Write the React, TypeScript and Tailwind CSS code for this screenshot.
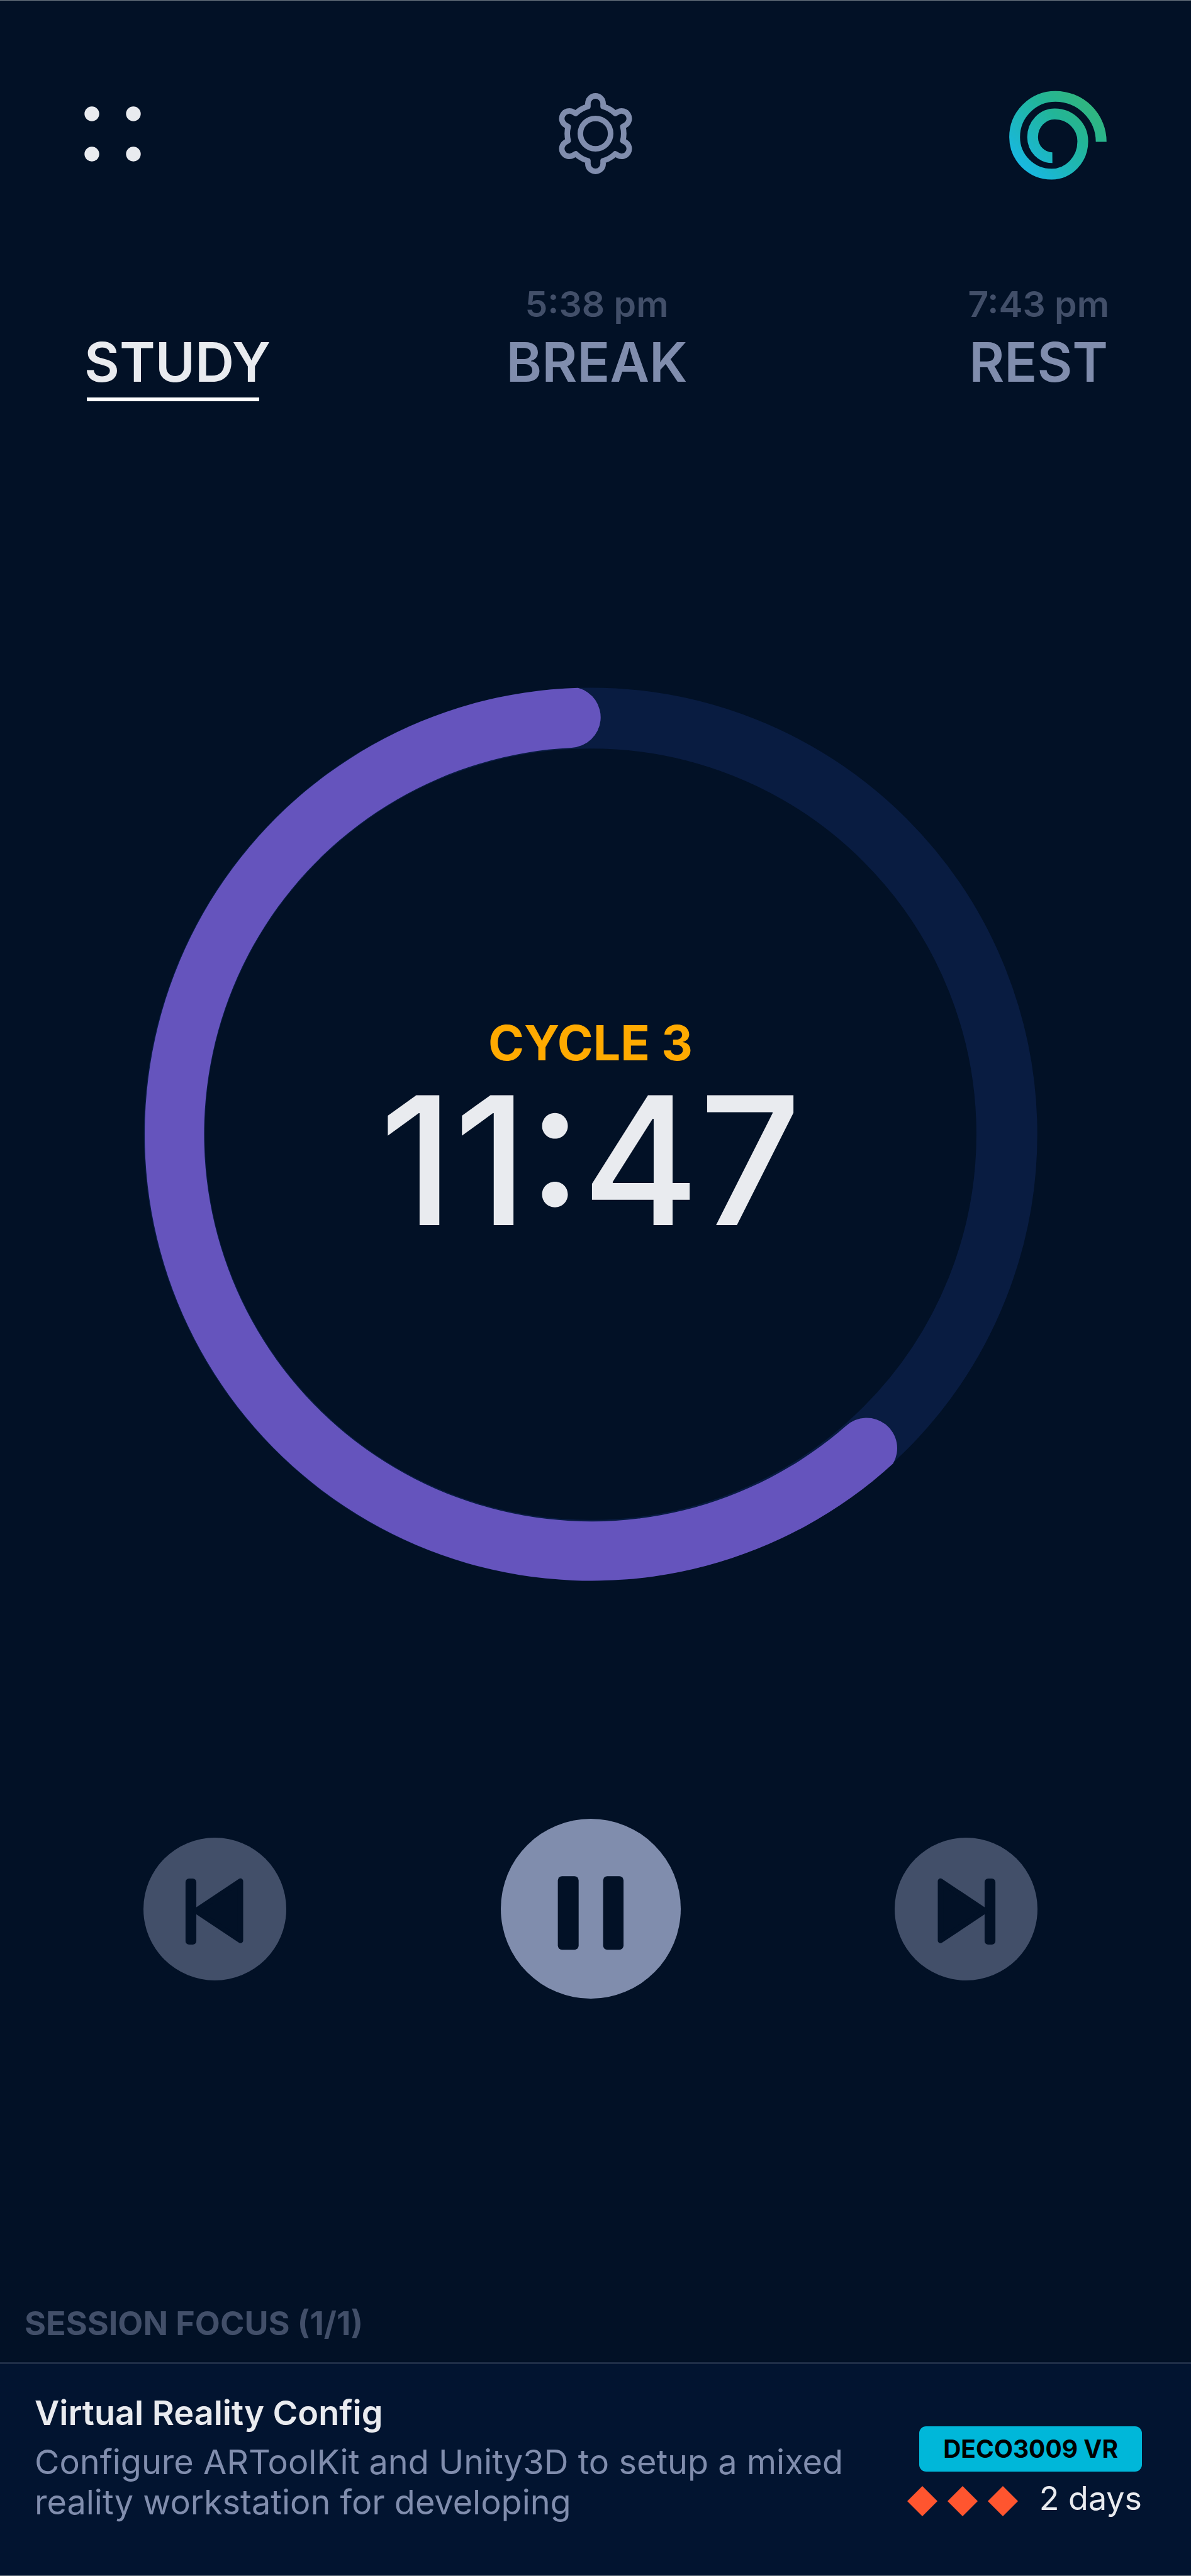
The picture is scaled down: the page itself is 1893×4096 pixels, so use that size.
import React from "react";

function MenuDots() {
  return (
    <svg viewBox="0 0 90 88" className="h-[88px] w-[90px]" fill="#e9ebef" aria-hidden="true">
      <circle cx="12" cy="12" r="11.7" />
      <circle cx="78" cy="12" r="11.7" />
      <circle cx="12" cy="76" r="11.7" />
      <circle cx="78" cy="76" r="11.7" />
    </svg>
  );
}

const rotate = (x: number, y: number, deg: number) => {
  const a = (deg * Math.PI) / 180;
  const rx = x * Math.cos(a) - y * Math.sin(a);
  const ry = x * Math.sin(a) + y * Math.cos(a);
  return `${rx.toFixed(1)} ${ry.toFixed(1)}`;
};

// Six rounded teeth joined by arcs of the gear body.
const gearPath =
  [0, 60, 120, 180, 240, 300]
    .map((deg, i) => {
      const start = rotate(-59, -211, deg);
      const join = i === 0 ? `M${start}` : `A219 219 0 0 1 ${start}`;
      return `${join}L${rotate(-59, -234, deg)}A59 59 0 0 1 ${rotate(59, -234, deg)}L${rotate(59, -211, deg)}`;
    })
    .join("") + `A219 219 0 0 1 ${rotate(-59, -211, 0)}Z`;

function GearIcon() {
  return (
    <svg
      viewBox="-315 -315 630 630"
      className="size-[129px]"
      fill="none"
      stroke="#808dad"
      strokeWidth="43"
      strokeLinejoin="round"
      aria-hidden="true"
    >
      <path d={gearPath} />
      <circle r="117.5" />
    </svg>
  );
}

function SpiralLogo() {
  return (
    <svg viewBox="169 80 761 720" className="h-[147px] w-[155px]" fill="none" aria-hidden="true">
      <defs>
        <linearGradient id="spiral" gradientUnits="userSpaceOnUse" x1="290" y1="720" x2="800" y2="210">
          <stop offset="0" stopColor="#18b8e0" />
          <stop offset="0.65" stopColor="#22b598" />
          <stop offset="1" stopColor="#31b57f" />
        </linearGradient>
      </defs>
      <path
        d="M887 504A357 355 0 0 0 530 149A318.500 318 0 0 0 211.500 467A288.500 289 0 0 0 500 756A243.500 256 0 0 0 743.500 500A218.500 214 0 0 0 525 286A173 181 0 0 0 352 467A153 161 0 0 0 506 628"
        stroke="url(#spiral)"
        strokeWidth="84"
      />
    </svg>
  );
}

function SkipIcon({ className }: { className?: string }) {
  return (
    <svg viewBox="0 0 370 370" className={className} fill="#021126" aria-hidden="true">
      <rect x="233" y="106" width="28" height="171" rx="9" />
      <path d="M118.700 112.500V266.500L234.200 189.500Z" stroke="#021126" strokeWidth="14" strokeLinejoin="round" />
    </svg>
  );
}

function PauseIcon() {
  return (
    <svg viewBox="0 0 467 467" className="size-full" fill="#021126" aria-hidden="true">
      <rect x="148" y="149" width="54" height="191" rx="11" />
      <rect x="265.500" y="149" width="53" height="191" rx="11" />
    </svg>
  );
}

function ProgressRing() {
  return (
    <svg viewBox="14 13.500 1541 1541" className="col-start-1 row-start-1 w-full" fill="none" aria-hidden="true">
      <circle cx="784.700" cy="784" r="717.500" stroke="#091c41" strokeWidth="105" />
      <path
        d="M763 14.300A770 770 0 1 0 1306 1352A52.500 52.500 0 0 0 1225 1287A667.500 667.500 0 1 1 752 117.500A52.500 52.500 0 0 0 763 14.300Z"
        fill="#6554bd"
      />
    </svg>
  );
}

function Tab({ label, time, active, align }: { label: string; time?: string; active?: boolean; align: string }) {
  return (
    <button type="button" role="tab" aria-selected={!!active} className={`flex flex-col ${align}`}>
      {time && <span className="mb-1 text-[57px] leading-[72px] font-semibold text-[#424f69]">{time}</span>}
      <span
        className={`text-[86px] leading-[104px] font-semibold ${active ? "text-[#e9ebef]" : "text-[#808dad]"}`}
      >
        {label}
      </span>
      <span className={`mt-1 ml-1 h-1.5 ${active ? "w-[274px] bg-white" : "w-0"}`} />
    </button>
  );
}

function Diamond() {
  return (
    <svg viewBox="0 0 48 48" className="size-12" fill="#ff552f" aria-hidden="true">
      <path d="M24 0L48 24L24 48L0 24Z" />
    </svg>
  );
}

export default function App() {
  return (
    <div className="flex min-h-screen flex-col border-y border-[#6d7883] bg-[#021126] font-['Inter',sans-serif]">
      <header className="grid grid-cols-[1fr_auto_1fr] items-center px-[134px] pt-[138px]">
        <button type="button" aria-label="Menu" className="justify-self-start">
          <MenuDots />
        </button>
        <button type="button" aria-label="Settings">
          <GearIcon />
        </button>
        <a href="#home" aria-label="Home" className="justify-self-end">
          <SpiralLogo />
        </a>
      </header>

      <div
        role="tablist"
        aria-label="Session phase"
        className="grid grid-cols-[1fr_auto_1fr] items-end pt-[162px] pr-[130px] pl-[134px]"
      >
        <Tab label="STUDY" active align="items-start justify-self-start" />
        <Tab label="BREAK" time="5:38 pm" align="items-center" />
        <Tab label="REST" time="7:43 pm" align="items-center justify-self-end" />
      </div>

      <main className="pt-[455px] pr-[244px] pl-[228px]">
        <section aria-label="Timer" className="grid">
          <ProgressRing />
          <div className="col-start-1 row-start-1 flex flex-col items-center self-center pb-3 text-center">
            <h1 className="text-[77px] leading-[94px] font-bold text-[#ffaa00]">CYCLE 3</h1>
            <p className="text-[284px] leading-[280px] font-medium text-[#e9ebef]">11:47</p>
          </div>
        </section>

        <div className="flex items-center justify-between pt-[378px]">
          <button type="button" aria-label="Previous" className="size-[227px] rounded-full bg-[#424f69]">
            <SkipIcon className="size-full -scale-x-100" />
          </button>
          <button type="button" aria-label="Pause" className="size-[286px] rounded-full bg-[#808dad]">
            <PauseIcon />
          </button>
          <button type="button" aria-label="Next" className="size-[227px] rounded-full bg-[#424f69]">
            <SkipIcon className="size-full" />
          </button>
        </div>
      </main>

      <footer className="mt-auto">
        <h2 className="pb-[29px] pl-[39px] text-[52px] leading-[64px] font-bold text-[#424f69]">
          SESSION FOCUS (1/1)
        </h2>
        <div className="flex justify-between border-t-3 border-[#1f2e47] bg-[#021430] pt-[46px] pr-[78px] pb-[84px] pl-[55px]">
          <div className="max-w-[1330px]">
            <h3 className="mb-3.5 text-[54px] leading-[64px] font-semibold text-[#e9ebef]">Virtual Reality Config</h3>
            <p className="text-[54px] leading-[64px] text-[#808dad]">
              Configure ARToolKit and Unity3D to setup a mixed reality workstation for developing
            </p>
          </div>
          <div className="flex flex-col items-end justify-end gap-[11px] pb-1.5">
            <span className="rounded-[11px] bg-[#00b7d9] px-[38px] text-[39px] leading-[72px] font-bold text-black">
              DECO3009 VR
            </span>
            <div className="flex items-center gap-[34px]">
              <div className="flex gap-4 pt-2" role="img" aria-label="Priority 3">
                <Diamond />
                <Diamond />
                <Diamond />
              </div>
              <span className="text-[52px] leading-[64px] text-[#e9ebef]">2 days</span>
            </div>
          </div>
        </div>
      </footer>
    </div>
  );
}
